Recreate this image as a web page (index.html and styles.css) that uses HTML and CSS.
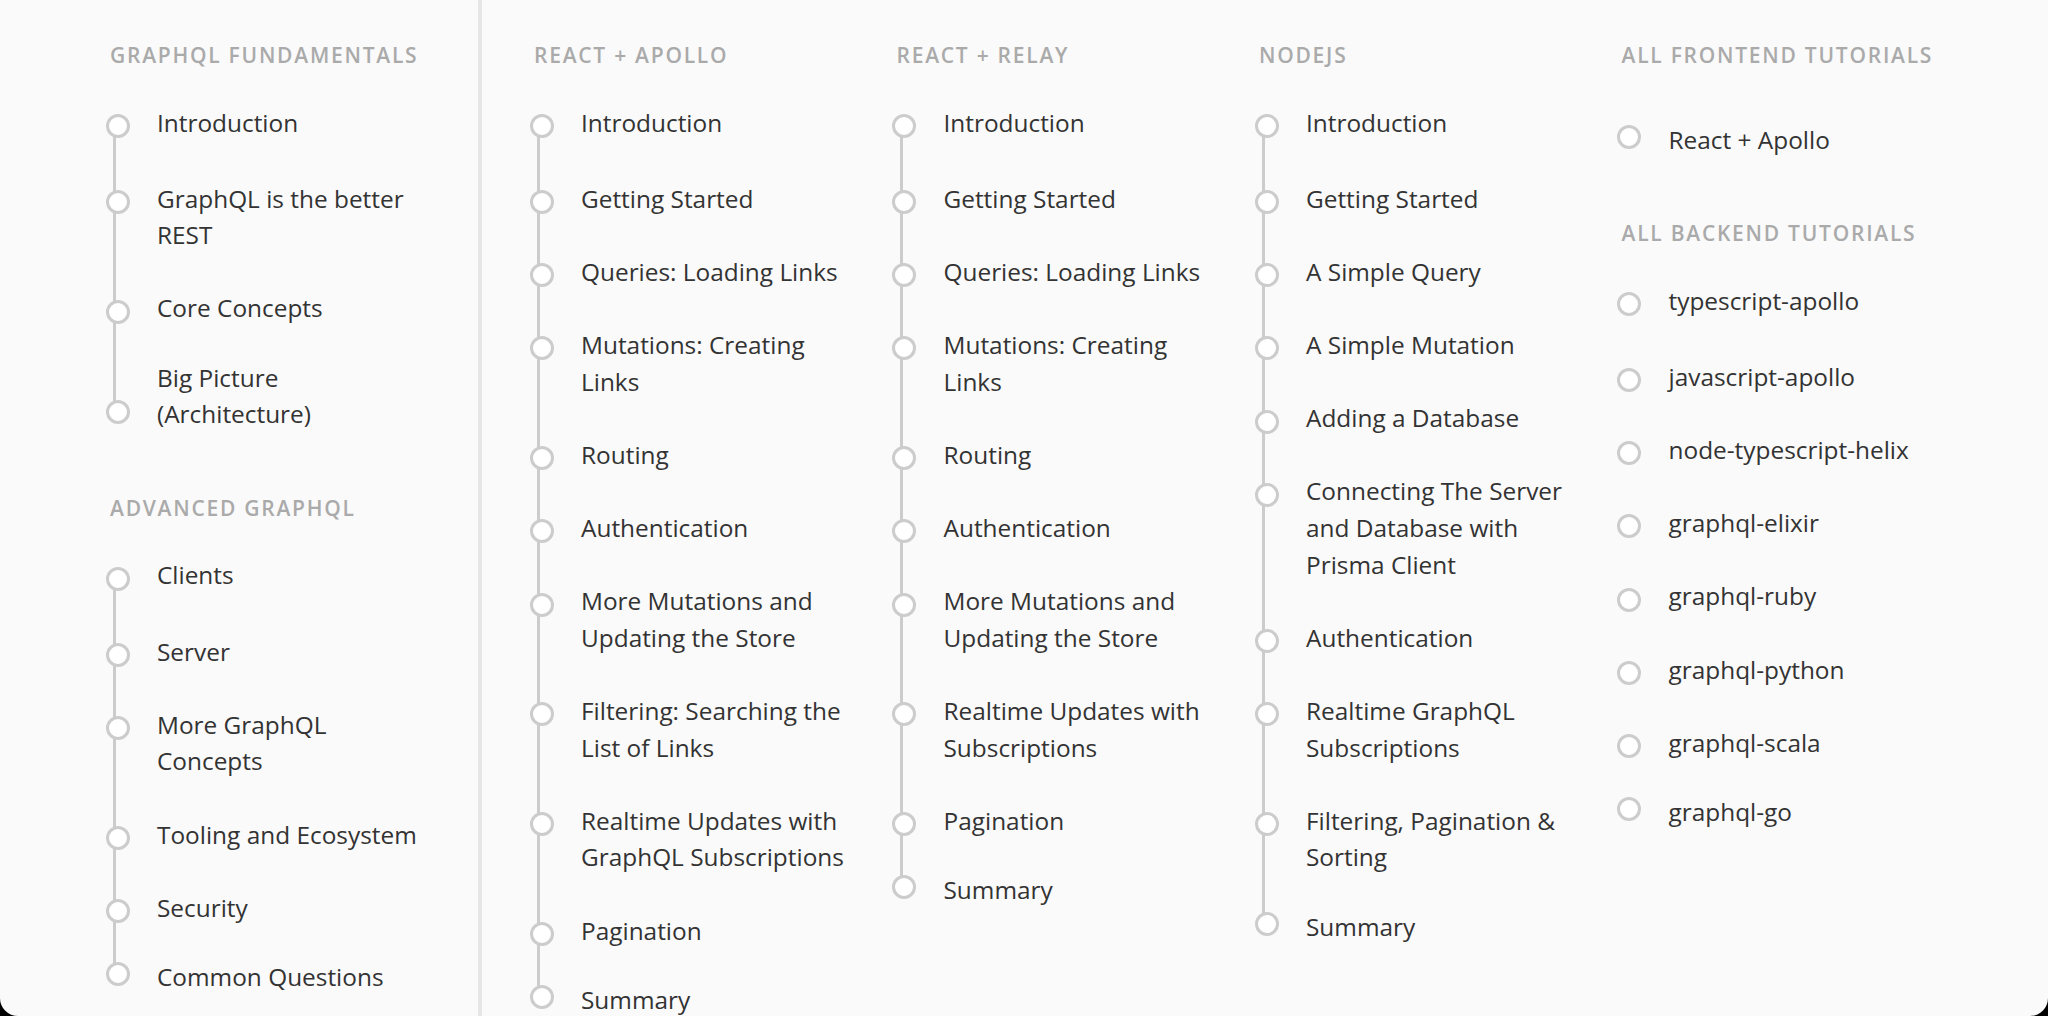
FILE: index.html
```html
<!DOCTYPE html>
<html>
<head>
    <title>How to GraphQL - Tutorials</title>
    <link rel="stylesheet" href="styles.css">
</head>
<body>
    <div class="page">
        <aside class="sidebar">
            <div class="section">
                <h3 class="section-title">GraphQL Fundamentals</h3>
                <ul class="steps timeline">
                    <li>Introduction</li>
                    <li>GraphQL is the better REST</li>
                    <li>Core Concepts</li>
                    <li>Big Picture (Architecture)</li>
                </ul>
            </div>
            <div class="section">
                <h3 class="section-title">Advanced GraphQL</h3>
                <ul class="steps timeline">
                    <li>Clients</li>
                    <li>Server</li>
                    <li>More GraphQL Concepts</li>
                    <li>Tooling and Ecosystem</li>
                    <li>Security</li>
                    <li>Common Questions</li>
                </ul>
            </div>
        </aside>

        <main class="content">
            <div class="section">
                <h3 class="section-title">React + Apollo</h3>
                <ul class="steps timeline">
                    <li>Introduction</li>
                    <li>Getting Started</li>
                    <li>Queries: Loading Links</li>
                    <li>Mutations: Creating Links</li>
                    <li>Routing</li>
                    <li>Authentication</li>
                    <li>More Mutations and Updating the Store</li>
                    <li>Filtering: Searching the List of Links</li>
                    <li>Realtime Updates with GraphQL Subscriptions</li>
                    <li>Pagination</li>
                    <li>Summary</li>
                </ul>
            </div>

            <div class="section">
                <h3 class="section-title">React + Relay</h3>
                <ul class="steps timeline">
                    <li>Introduction</li>
                    <li>Getting Started</li>
                    <li>Queries: Loading Links</li>
                    <li>Mutations: Creating Links</li>
                    <li>Routing</li>
                    <li>Authentication</li>
                    <li>More Mutations and Updating the Store</li>
                    <li>Realtime Updates with Subscriptions</li>
                    <li>Pagination</li>
                    <li>Summary</li>
                </ul>
            </div>

            <div class="section">
                <h3 class="section-title">NodeJS</h3>
                <ul class="steps timeline">
                    <li>Introduction</li>
                    <li>Getting Started</li>
                    <li>A Simple Query</li>
                    <li>A Simple Mutation</li>
                    <li>Adding a Database</li>
                    <li>Connecting The Server and Database with Prisma Client</li>
                    <li>Authentication</li>
                    <li>Realtime GraphQL Subscriptions</li>
                    <li>Filtering, Pagination &amp; Sorting</li>
                    <li>Summary</li>
                </ul>
            </div>

            <div class="stack">
                <div class="section">
                    <h3 class="section-title">All Frontend Tutorials</h3>
                    <ul class="steps single">
                        <li>React + Apollo</li>
                    </ul>
                </div>
                <div class="section">
                    <h3 class="section-title">All Backend Tutorials</h3>
                    <ul class="steps">
                        <li>typescript-apollo</li>
                        <li>javascript-apollo</li>
                        <li>node-typescript-helix</li>
                        <li>graphql-elixir</li>
                        <li>graphql-ruby</li>
                        <li>graphql-python</li>
                        <li>graphql-scala</li>
                        <li>graphql-go</li>
                    </ul>
                </div>
            </div>
        </main>
    </div>
</body>
</html>
```

FILE: styles.css
```css
* {
    box-sizing: border-box;
}

html, body {
    margin: 0;
    height: 100%;
    background-color: #000;
}

body {
    font-family: "Open Sans", "Noto Sans", sans-serif;
    color: #333;
}

.page {
    display: flex;
    height: 1016px;
    background-color: #fafafa;
    border-radius: 0 0 18px 18px;
    overflow: hidden;
}

.sidebar {
    width: 482px;
    flex-shrink: 0;
    padding: 40px 0 0 110px;
    border-right: 4px solid #e6e6e6;
}

.content {
    flex: 1;
    display: grid;
    grid-template-columns: repeat(4, 362.5px);
    align-items: start;
    padding: 40px 0 0 52px;
}

.section {
    width: 316px;
}

.sidebar .section + .section,
.stack .section + .section {
    margin-top: 60px;
}

.section-title {
    margin: 0 0 34.5px;
    font-size: 21px;
    line-height: 30px;
    font-weight: 600;
    letter-spacing: 1.75px;
    text-transform: uppercase;
    white-space: nowrap;
    color: #aaa;
}

.steps {
    position: relative;
    list-style: none;
    margin: 0;
    padding: 0;
}

/* the grey rail that joins the dots */
.steps.timeline::before {
    content: '';
    position: absolute;
    left: 3px;
    top: 18.3px;
    bottom: 18.3px;
    width: 3px;
    background-color: #ccc;
}

.steps li {
    position: relative;
    padding: 0 0 36.6px 47px;
    font-size: 24.4px;
    line-height: 36.6px;
}

.steps li:first-child {
    padding-bottom: 39.6px;
}

.steps li:last-child {
    margin-top: -3.9px;
    padding-bottom: 0;
}

.steps li::before {
    content: '';
    position: absolute;
    left: -4.5px;
    top: 9.3px;
    width: 18px;
    height: 18px;
    border: 3px solid #ccc;
    border-radius: 50%;
    background-color: #fff;
}

.steps li:last-child::before {
    top: auto;
    bottom: 9.3px;
}

.steps.single li {
    margin-top: 0;
    padding-top: 17px;
}
```
